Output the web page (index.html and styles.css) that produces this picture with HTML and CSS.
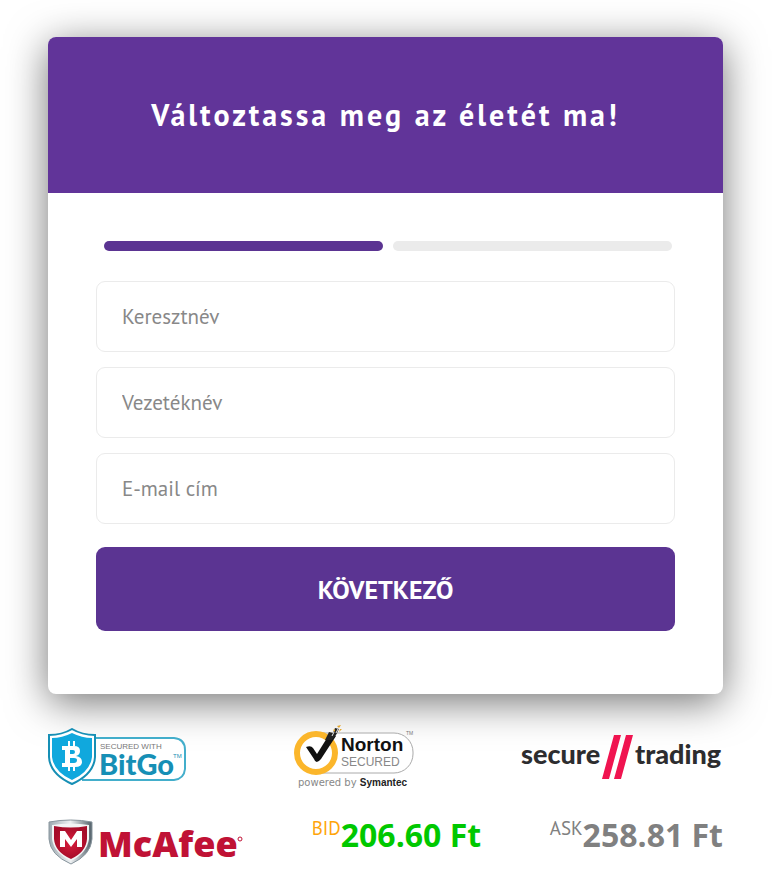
FILE: index.html
```
<!DOCTYPE html>
<html lang="hu">
<head>
    <meta charset="UTF-8">
    <meta name="viewport" content="width=device-width, initial-scale=1.0">
    <title>Változtassa meg az életét ma!</title>
    <link rel="stylesheet" href="styles.css">
</head>
<body>
    <div class="container">
        <div class="card">
            <div class="card-header">
                <h1>Változtassa meg az életét ma!</h1>
            </div>
            <form class="signup">
                <div class="steps">
                    <span class="step active"></span>
                    <span class="step"></span>
                </div>
                <input type="text" name="first_name" placeholder="Keresztnév" aria-label="Keresztnév">
                <input type="text" name="last_name" placeholder="Vezetéknév" aria-label="Vezetéknév">
                <input type="email" name="email" placeholder="E-mail cím" aria-label="E-mail cím">
                <button type="submit">KÖVETKEZŐ</button>
            </form>
        </div>

        <div class="logos">
            <svg width="138" height="58" viewBox="0 0 138 58" role="img" aria-label="BitGo">
                <path d="M38 10H126Q137 11 137 22V41Q136 51 126 52H34" fill="#fff" stroke="#43aecb" stroke-width="2"/>
                <path d="M24 1Q34 7 47 7V29Q46 46 24 56Q2 46 1 29V7Q14 7 24 1Z" fill="#fff" stroke="#168fb5" stroke-width="2"/>
                <path d="M24 5Q34 10 44 10V29Q42 44 24 52Q6 44 4 29V10Q14 10 24 5Z" fill="#10a8dd"/>
                <path d="M14 18H26Q32 18 32 23Q32 27 28 28Q34 29 34 34Q34 39 27 39H14V35H17V22H14ZM22 22V26H25Q27 26 27 24Q27 22 25 22ZM22 30V35H26Q29 35 29 32Q29 30 26 30ZM20 13H22V18H20ZM25 13H27V18H25ZM20 39H22V43H20ZM25 39H27V43H25Z" fill="#fff" fill-rule="evenodd"/>
                <text x="52" y="21" class="bitgo-small">SECURED WITH</text>
                <text x="51" y="47" class="bitgo">BitGo</text>
                <text x="125" y="30" class="bitgo-tm">TM</text>
            </svg>
            <svg width="120" height="66" viewBox="0 0 120 66" role="img" aria-label="Norton Secured">
                <rect x="10" y="9" width="109" height="40" rx="19" fill="#fff" stroke="#aaa"/>
                <circle cx="22" cy="29" r="19" fill="#fff" stroke="#fbb62b" stroke-width="6"/>
                <path d="M12 23Q17 21 19 24L23 30L33 14L38 10L42 12L27 35Q22 41 20 35Z" fill="#111"/>
                <path d="M31 16L35 8L39 9L41 4L45 5L42 11L38 16Z" fill="#222"/>
                <path d="M43 2L47 1L45 4ZM46 5L48 5L45 8ZM39 6L41 5L41 8Z" fill="#e4a62d"/>
                <path d="M38 12L40 8M42 9L44 5" stroke="#eee" fill="none"/>
                <text x="47" y="27" class="norton">Norton</text>
                <text x="47" y="42" class="norton-small">SECURED</text>
                <text x="112" y="11" class="norton-tm">TM</text>
                <text x="4" y="62" class="powered">powered by <tspan class="symantec">Symantec</tspan></text>
            </svg>
            <svg width="202" height="44" viewBox="0 0 202 44" role="img" aria-label="secure trading">
                <text x="0" y="29" class="secure">secure</text>
                <path d="M93 0H100L88 44H81ZM105 0H112L100 44H93Z" fill="#f01450"/>
                <text x="114" y="29" class="secure">trading</text>
            </svg>
        </div>

        <div class="logos prices">
            <svg class="mcafee-logo" width="195" height="46" viewBox="0 0 195 46" role="img" aria-label="McAfee">
                <defs>
                    <linearGradient id="silver" x1="0" x2="1">
                        <stop offset="0" stop-color="#9da9b0"/>
                        <stop offset="0.5" stop-color="#edf0f2"/>
                        <stop offset="1" stop-color="#526069"/>
                    </linearGradient>
                    <radialGradient id="red">
                        <stop offset="0" stop-color="#d91c3b"/>
                        <stop offset="1" stop-color="#a60c29"/>
                    </radialGradient>
                </defs>
                <path d="M1 3Q23 -1 44 3V20Q43 36 23 45Q2 36 1 20Z" fill="url(#silver)" stroke="#89969e"/>
                <path d="M4 6Q23 3 41 6V20Q39 34 23 42Q6 34 4 20Z" fill="#f3f4f5"/>
                <path d="M6 7Q23 10 39 7V20Q38 33 23 40Q7 33 6 20Z" fill="url(#red)"/>
                <path d="M12 28V12H17L23 21L29 12H34V28H29V20L23 28L17 20V28Z" fill="#fff"/>
                <text x="50" y="38" class="mcafee">McAfee</text>
                <circle cx="192" cy="20" r="2" fill="none" stroke="#c01235"/>
            </svg>
            <div class="price bid"><span>BID</span><strong>206.60 Ft</strong></div>
            <div class="price ask"><span>ASK</span><strong>258.81 Ft</strong></div>
        </div>
    </div>
</body>
</html>
```
FILE: styles.css
```
* {
    box-sizing: border-box;
}

body {
    font-family: "PT Sans", "Noto Sans", sans-serif;
    background: #fff;
    margin: 0;
}

.container {
    padding: 37px 59px 16px 48px;
}

.card {
    background: #fff;
    border-radius: 8px;
    box-shadow: 0 8px 40px rgba(0, 0, 0, 0.55);
}

.card-header {
    padding: 56px 20px;
    background: #613499;
    border-radius: 8px 8px 0 0;
    text-align: center;
}

h1 {
    margin: 0;
    color: #fff;
    font-family: "PT Sans", Lato, sans-serif;
    font-size: 30px;
    line-height: 44px;
    letter-spacing: 3px;
}

.signup {
    display: flex;
    flex-direction: column;
    gap: 15px;
    padding: 48px 48px 63px;
}

.steps {
    display: flex;
    gap: 10px;
    padding: 0 3px 0 8px;
    margin-bottom: 15px;
}

.step {
    flex: 1;
    height: 10px;
    border-radius: 5px;
    background: #ebebeb;
}

.step.active {
    background: #5b3492;
}

input {
    width: 100%;
    height: 71px;
    padding: 0 25px;
    border: 1px solid #ebebeb;
    border-radius: 9px;
    background: #fff;
    font-family: "PT Sans", "Noto Sans", sans-serif;
    font-size: 21px;
}

input::placeholder {
    color: #888;
}

button {
    height: 84px;
    margin-top: 8px;
    border: none;
    border-radius: 9px;
    background: #5b3492;
    color: #fff;
    font-family: "PT Sans", Lato, sans-serif;
    font-size: 26px;
    font-weight: bold;
    cursor: pointer;
}

.logos {
    position: relative;
    display: flex;
    justify-content: space-between;
    align-items: center;
    margin-top: 30px;
}

.prices {
    align-items: flex-start;
    margin-top: 29px;
}

.price {
    display: flex;
    align-items: flex-start;
    line-height: 32px;
}

.price span {
    font-family: "PT Sans", Lato, sans-serif;
    font-size: 19px;
    line-height: 18px;
}

.price strong {
    font-family: "Open Sans", sans-serif;
    font-size: 32px;
}

.bid span {
    color: #ffa50a;
}

.bid strong {
    color: #00c800;
}

.ask {
    color: #808080;
}

/* logo lettering */
.bitgo {
    font: 900 29px Lato, sans-serif;
    fill: #168fb5;
}

.bitgo-small {
    font: 8px "Liberation Sans", sans-serif;
    fill: #777;
}

.bitgo-tm {
    font: 6px "Liberation Sans", sans-serif;
    fill: #168fb5;
}

.norton {
    font: bold 19px "Liberation Sans", sans-serif;
    fill: #111;
}

.norton-small {
    font: 12px "Liberation Sans", sans-serif;
    fill: #888;
}

.norton-tm {
    font: 5px "Liberation Sans", sans-serif;
    fill: #777;
}

.powered {
    font: 10px "DejaVu Sans", sans-serif;
    fill: #888;
}

.symantec {
    font: bold 10px "Liberation Sans", sans-serif;
    fill: #222;
}

.secure {
    font: 900 27px Lato, sans-serif;
    fill: #2d2d2f;
}

.mcafee-logo {
    overflow: visible;
}

.mcafee {
    font: 800 36px "Open Sans", sans-serif;
    fill: #c01235;
}
```
